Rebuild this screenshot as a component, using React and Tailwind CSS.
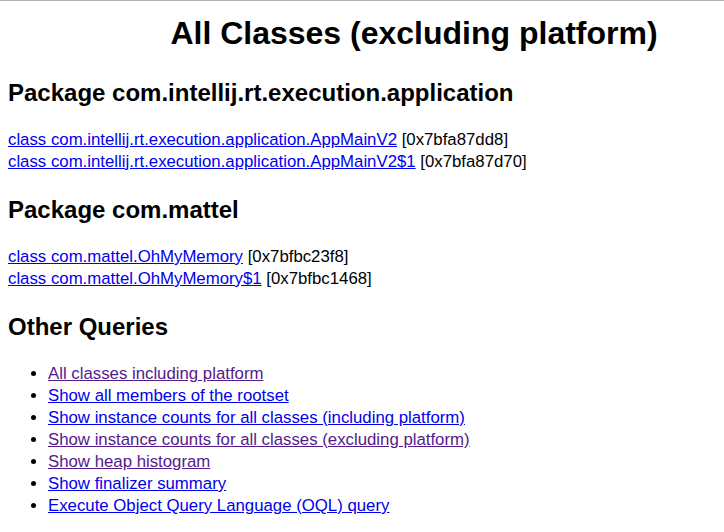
import React from 'react';

const packages = [
  {
    name: 'com.intellij.rt.execution.application',
    classes: [
      { name: 'com.intellij.rt.execution.application.AppMainV2', addr: '0x7bfa87dd8' },
      { name: 'com.intellij.rt.execution.application.AppMainV2$1', addr: '0x7bfa87d70' },
    ],
  },
  {
    name: 'com.mattel',
    classes: [
      { name: 'com.mattel.OhMyMemory', addr: '0x7bfbc23f8' },
      { name: 'com.mattel.OhMyMemory$1', addr: '0x7bfbc1468' },
    ],
  },
];

const queries = [
  { label: 'All classes including platform', visited: true },
  { label: 'Show all members of the rootset', visited: false },
  { label: 'Show instance counts for all classes (including platform)', visited: false },
  { label: 'Show instance counts for all classes (excluding platform)', visited: true },
  { label: 'Show heap histogram', visited: true },
  { label: 'Show finalizer summary', visited: false },
  { label: 'Execute Object Query Language (OQL) query', visited: false },
];

const App = () => {
  return (
    <div className="min-h-screen bg-white border-t border-[#b3b3b3] px-2 pt-[10px] text-black font-['Liberation_Sans',Arial,sans-serif]">
      <h1 className="pl-[104px] text-center text-[32px] leading-[44px] font-bold mb-[21px]">
        All Classes (excluding platform)
      </h1>

      {packages.map(pkg => (
        <div key={pkg.name}>
          <h2 className="text-[24px] leading-[33px] font-bold mb-5">Package {pkg.name}</h2>
          <div className="text-[16.8px] leading-[22px] mb-5">
            {pkg.classes.map(cls => (
              <div key={cls.name}>
                <a href="#" className="text-[#0000ee] underline">class {cls.name}</a> [{cls.addr}]
              </div>
            ))}
          </div>
        </div>
      ))}

      <h2 className="text-[24px] leading-[33px] font-bold mb-5">Other Queries</h2>
      <ul className="list-disc pl-10 text-[16.8px] leading-[22px]">
        {queries.map(q => (
          <li key={q.label}>
            <a href="#" className={`underline ${q.visited ? 'text-[#551a8b]' : 'text-[#0000ee]'}`}>
              {q.label}
            </a>
          </li>
        ))}
      </ul>
    </div>
  );
};

export default App;
